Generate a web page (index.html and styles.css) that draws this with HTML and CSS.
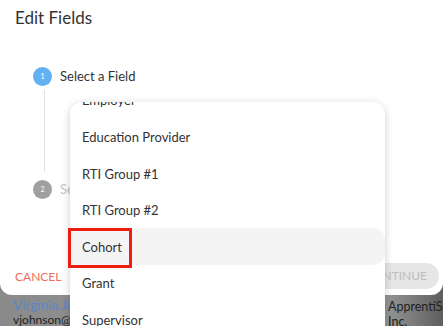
FILE: index.html
```html
<!DOCTYPE html>
<html>
<head>
<meta charset="utf-8">
<link rel="stylesheet" href="styles.css">
</head>
<body>
<div class="page">
  <div class="dialog">
    <h1 class="title">Edit Fields</h1>
    <div class="stepper">
      <div class="step">
        <span class="dot dot-active">1</span>
        <span class="label">Select a Field</span>
      </div>
      <div class="connector"></div>
      <div class="step">
        <span class="dot dot-idle">2</span>
        <span class="label label-idle">Select Values</span>
      </div>
    </div>
    <div class="actions">
      <span class="cancel">CANCEL</span>
      <span class="continue">CONTINUE</span>
    </div>
  </div>
  <div class="behind">
    <div class="col-left">
      <div class="name">Virginia Johnson</div>
      <div class="email">vjohnson@apprentiscope.com</div>
    </div>
    <div class="col-right">
      <div class="org">ApprentiScope</div>
      <div class="org">Inc.</div>
    </div>
  </div>

  <div class="menu">
    <div class="card">
      <ul class="list">
        <li class="item">Employer</li>
        <li class="item">Education Provider</li>
        <li class="item">RTI Group #1</li>
        <li class="item">RTI Group #2</li>
        <li class="item item-hover">Cohort</li>
        <li class="item">Grant</li>
        <li class="item">Supervisor</li>
      </ul>
    </div>
    <div class="mark"></div>
  </div>
</div>
</body>
</html>
```

FILE: styles.css
```css
* { box-sizing: border-box; }
html, body {
  margin: 0;
  padding: 0;
  width: 443px;
  height: 326px;
  overflow: hidden;
}
body {
  font-family: Lato, "Open Sans", sans-serif;
  background: linear-gradient(to right, #8a8a8a 0%, #979797 60%, #9a9a9a 86%, #5e5e5e 100%);
}
.page {
  position: relative;
  width: 443px;
  height: 326px;
  overflow: hidden;
}
.dialog {
  background: #fff;
  height: 295px;
  border-radius: 0 0 12px 12px;
  display: flex;
  flex-direction: column;
  padding: 8px 4px 6px 15px;
}
.title {
  margin: 0;
  font-size: 17px;
  line-height: 20px;
  font-weight: 400;
  color: #333;
}
.stepper {
  margin-top: 36px;
  padding-left: 18px;
  display: flex;
  flex-direction: column;
}
.step {
  display: flex;
  align-items: center;
  height: 24px;
  gap: 8px;
}
.dot {
  width: 19px;
  height: 19px;
  border-radius: 50%;
  color: #fff;
  font-size: 7px;
  display: flex;
  align-items: center;
  justify-content: center;
}
.dot-active { background: #64b1f1; }
.dot-idle { background: #a0a0a0; }
.label {
  font-size: 13px;
  color: #333;
}
.label-idle { color: #c4c4c4; }
.connector {
  height: 82px;
  margin: 2px 0 5px 11px;
  border-left: 1px solid #e2e2e2;
}
.actions {
  margin-top: auto;
  display: flex;
  justify-content: space-between;
  align-items: center;
  height: 26px;
}
.cancel {
  font-size: 12px;
  color: #f06a5e;
}
.continue {
  height: 26px;
  line-height: 26px;
  padding: 0 12px 0 14px;
  border-radius: 13px;
  background: #e6e6e6;
  color: #bdbdbd;
  font-size: 12px;
}
.behind {
  display: flex;
  height: 31px;
}
.col-left {
  flex: 0 0 388px;
  padding: 3px 0 0 13px;
  white-space: nowrap;
  overflow: hidden;
}
.name {
  font-size: 13.5px;
  line-height: 15px;
  color: #5b86cc;
}
.email {
  font-size: 12px;
  line-height: 13px;
  color: #1e1e1e;
}
.col-right {
  flex: 0 0 auto;
  padding-top: 4px;
  white-space: nowrap;
}
.org {
  font-size: 12.5px;
  line-height: 15px;
  color: #222;
}
.menu {
  position: absolute;
  left: 70px;
  top: 102px;
  width: 315px;
  height: 240px;
}
.card {
  height: 100%;
  background: #fff;
  border-radius: 12px;
  overflow: hidden;
  box-shadow: 0 2px 9px rgba(0, 0, 0, 0.2);
}
.list {
  list-style: none;
  margin: -19.9px 0 0 0;
  padding: 0;
}
.item {
  height: 36.6px;
  display: flex;
  align-items: center;
  padding-left: 12px;
  font-size: 13px;
  color: #333;
}
.item-hover {
  background: #f4f4f4;
  border-radius: 0 12px 12px 0;
}
.mark {
  position: absolute;
  left: -2px;
  top: 126px;
  width: 64px;
  height: 40px;
  border: 3px solid #f01c12;
}
```
